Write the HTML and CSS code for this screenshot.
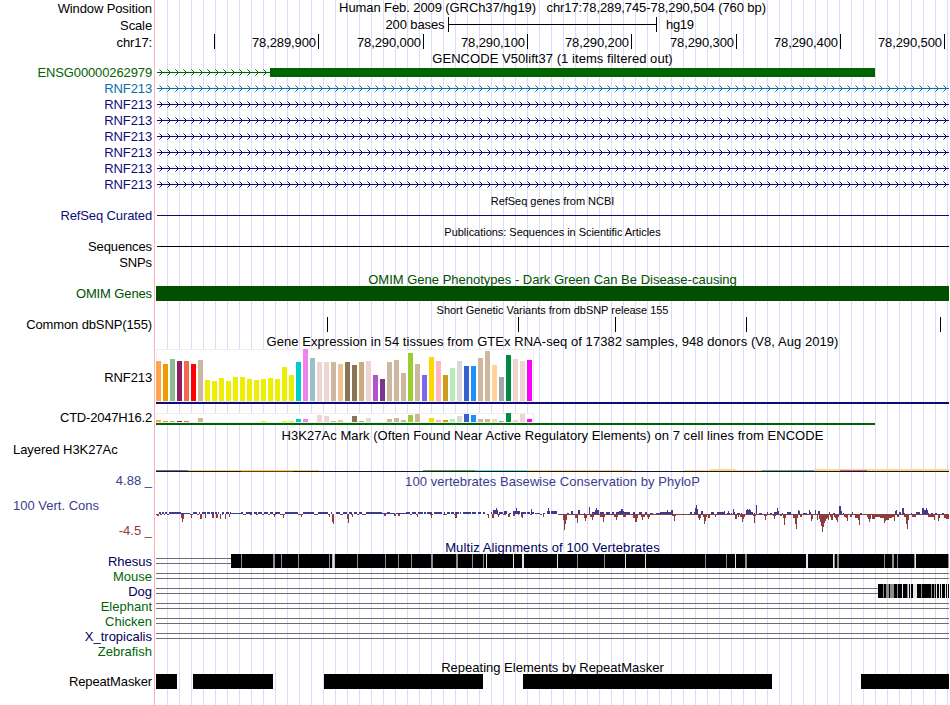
FILE: index.html
```html
<!DOCTYPE html>
<html lang="en">

<head>
    <meta charset="UTF-8">
    <title>Genome Browser - chr17:78,289,745-78,290,504</title>
    <link rel="stylesheet" href="styles.css">
</head>

<body>
    <main class="browser">
        <div class="track ruler">
            <div class="label">Window Position</div>
            <div class="title position">Human Feb. 2009 (GRCh37/hg19) &nbsp; chr17:78,289,745-78,290,504 (760 bp)</div>
        </div>
        <div class="track ruler">
            <div class="label">Scale</div>
            <svg class="plot" width="793" height="17">
                <text x="288.5" y="12" text-anchor="end" textLength="59">200 bases</text>
                <path d="M292 0h1v15h-1zM293 7h207v1h-207zM500 0h1v15h-1z" />
                <text x="510" y="12" textLength="28">hg19</text>
            </svg>
        </div>
        <div class="track coords">
            <div class="label">chr17:</div>
            <svg class="plot" id="coords" width="793" height="15"></svg>
        </div>

        <div class="heading">GENCODE V50lift37 (1 items filtered out)</div>
        <div class="track gene green">
            <div class="label">ENSG00000262979</div>
            <svg class="plot transcript" data-end="114" width="793" height="16">
                <rect x="114" y="4" width="605" height="9" />
            </svg>
        </div>
        <div class="track gene lightblue">
            <div class="label">RNF213</div>
            <svg class="plot transcript" width="793" height="16"></svg>
        </div>
        <div class="track gene navy">
            <div class="label">RNF213</div>
            <svg class="plot transcript" width="793" height="16"></svg>
        </div>
        <div class="track gene navy">
            <div class="label">RNF213</div>
            <svg class="plot transcript" width="793" height="16"></svg>
        </div>
        <div class="track gene navy">
            <div class="label">RNF213</div>
            <svg class="plot transcript" width="793" height="16"></svg>
        </div>
        <div class="track gene navy">
            <div class="label">RNF213</div>
            <svg class="plot transcript" width="793" height="16"></svg>
        </div>
        <div class="track gene navy">
            <div class="label">RNF213</div>
            <svg class="plot transcript" width="793" height="16"></svg>
        </div>
        <div class="track gene navy">
            <div class="label">RNF213</div>
            <svg class="plot transcript" width="793" height="16"></svg>
        </div>

        <div class="heading small">RefSeq genes from NCBI</div>
        <div class="track navy">
            <div class="label">RefSeq Curated</div>
            <svg class="plot" width="793" height="15">
                <rect x="1" y="7" width="792" height="1" />
            </svg>
        </div>

        <div class="heading small">Publications: Sequences in Scientific Articles</div>
        <div class="track">
            <div class="label">Sequences</div>
            <svg class="plot" width="793" height="15">
                <rect x="1" y="7" width="792" height="1" />
            </svg>
        </div>
        <div class="track gene">
            <div class="label">SNPs</div>
        </div>

        <div class="heading omim">OMIM Gene Phenotypes - Dark Green Can Be Disease-causing</div>
        <div class="track omim">
            <div class="label">OMIM Genes</div>
            <svg class="plot" width="793" height="15">
                <rect width="793" height="15" />
            </svg>
        </div>

        <div class="heading small">Short Genetic Variants from dbSNP release 155</div>
        <div class="track">
            <div class="label">Common dbSNP(155)</div>
            <svg class="plot" width="793" height="15">
                <path d="M171 0h1v15h-1zM362 0h1v15h-1zM459 0h1v15h-1zM590 0h1v15h-1zM784 0h1v15h-1z" />
            </svg>
        </div>

        <div class="heading gtex-heading">Gene Expression in 54 tissues from GTEx RNA-seq of 17382 samples, 948 donors (V8, Aug 2019)</div>
        <div class="track gtex">
            <div class="label">RNF213</div>
            <svg class="plot" width="793" height="55">
                <rect class="box" x="0.5" y="0.5" width="377" height="52" />
                <g id="gtexRnf"></g>
                <rect class="navy" x="0" y="53" width="793" height="2" />
            </svg>
        </div>
        <div class="track gtex-low">
            <div class="label">CTD-2047H16.2</div>
            <svg class="plot" width="793" height="12">
                <rect class="box" x="0.5" y="0.5" width="377" height="9" />
                <g id="gtexCtd"></g>
                <rect class="green" x="0" y="10" width="719" height="2" />
            </svg>
        </div>

        <div class="heading h3k-heading">H3K27Ac Mark (Often Found Near Active Regulatory Elements) on 7 cell lines from ENCODE</div>
        <div class="track h3k">
            <div class="label left">Layered H3K27Ac</div>
            <svg class="plot" width="793" height="29">
                <rect x="0" y="27" width="32" height="1" fill="#7d6985" />
                <rect x="32" y="27" width="131" height="1" fill="#ffc966" />
                <rect x="267" y="27" width="52" height="1" fill="#5bb04c" />
                <rect x="319" y="27" width="52" height="1" fill="#66e6cc" />
                <rect x="371" y="27" width="105" height="1" fill="#ffd070" />
                <rect x="528" y="27" width="78" height="1" fill="#ffd680" />
                <rect x="554" y="26" width="26" height="1" fill="#ffd680" />
                <rect x="606" y="27" width="52" height="1" fill="#6cab7c" />
                <rect x="658" y="26" width="26" height="2" fill="#ffd680" />
                <rect x="684" y="26" width="27" height="1" fill="#ffd0a0" />
                <rect x="684" y="27" width="27" height="1" fill="#e0607c" />
                <rect x="711" y="26" width="82" height="2" fill="#ffd680" />
                <rect x="0" y="28" width="793" height="1" fill="#15152e" />
                <rect x="85" y="28" width="52" height="1" fill="#5a4020" />
            </svg>
        </div>

        <div class="track cons">
            <div class="label cons-label">
                <span>4.88 _</span>
                <span class="cons-name">100 Vert. Cons</span>
                <span class="red">-4.5 _</span>
            </div>
            <div class="cons-plot">
                <div class="title">100 vertebrates Basewise Conservation by PhyloP</div>
                <svg class="plot" width="793" height="50">
                    <path id="consUp" />
                    <path id="consDown" class="red" />
                </svg>
            </div>
        </div>

        <div class="heading multiz-heading">Multiz Alignments of 100 Vertebrates</div>
        <div class="track species odd">
            <div class="label">Rhesus</div>
            <svg class="plot" id="rhesus" width="793" height="15">
                <path class="gap" d="M0 4h75v1h-75zM0 9h75v1h-75z" />
                <rect class="block" x="75" width="718" height="14" />
            </svg>
        </div>
        <div class="track species">
            <div class="label">Mouse</div>
            <svg class="plot" width="793" height="15">
                <path class="gap" d="M0 4h793v1h-793zM0 9h793v1h-793z" />
            </svg>
        </div>
        <div class="track species odd">
            <div class="label">Dog</div>
            <svg class="plot" id="dog" width="793" height="15">
                <path class="gap" d="M0 4h722v1h-722zM0 9h722v1h-722z" />
                <rect class="block" x="722" width="71" height="14" />
            </svg>
        </div>
        <div class="track species">
            <div class="label">Elephant</div>
            <svg class="plot" width="793" height="15">
                <path class="gap" d="M0 4h793v1h-793zM0 9h793v1h-793z" />
            </svg>
        </div>
        <div class="track species">
            <div class="label">Chicken</div>
            <svg class="plot" width="793" height="15">
                <path class="gap" d="M0 4h793v1h-793zM0 9h793v1h-793z" />
            </svg>
        </div>
        <div class="track species odd">
            <div class="label">X_tropicalis</div>
            <svg class="plot" width="793" height="15">
                <path class="gap" d="M0 4h793v1h-793zM0 9h793v1h-793z" />
            </svg>
        </div>
        <div class="track species">
            <div class="label">Zebrafish</div>
        </div>

        <div class="heading repeat-heading">Repeating Elements by RepeatMasker</div>
        <div class="track">
            <div class="label">RepeatMasker</div>
            <svg class="plot" width="793" height="15">
                <path d="M0 0h21v15h-21zM37 0h80v15h-80zM168 0h159v15h-159zM367 0h249v15h-249zM705 0h88v15h-88z" />
            </svg>
        </div>
    </main>
    <script src="script.js"></script>
</body>

</html>
```
FILE: styles.css
```css
* {
    box-sizing: border-box;
    margin: 0;
    padding: 0;
}

body {
    background: #fff;
    color: #000;
    font-family: "Liberation Sans", Arial, Helvetica, sans-serif;
    font-size: 13px;
}

.browser {
    width: 949px;
    height: 705px;
    overflow: hidden;
    background:
        linear-gradient(#ffb4b4, #ffb4b4) 154px 0 / 1px 100% no-repeat,
        repeating-linear-gradient(to right, transparent 0 11px, #dcdcfa 11px 12px) 156px 0 / 793px 100% no-repeat;
}

.track {
    display: flex;
    height: 15px;
}

.label {
    width: 152px;
    margin-right: 4px;
    line-height: 15px;
    letter-spacing: -0.12px;
    text-align: right;
    white-space: nowrap;
}

.title {
    width: 793px;
    line-height: 15px;
    text-align: center;
    white-space: pre;
}

.position {
    letter-spacing: -0.09px;
}

.heading {
    height: 16px;
    padding-left: 156px;
    line-height: 19px;
    letter-spacing: 0.05px;
    text-align: center;
    white-space: nowrap;
}

.heading.small {
    font-size: 11px;
    line-height: 18px;
    letter-spacing: -0.03px;
}

.plot {
    display: block;
    flex: none;
    fill: currentColor;
    overflow: hidden;
    shape-rendering: crispEdges;
}

.ruler {
    height: 17px;
}

.ruler .label {
    line-height: 17px;
}

.coords .label {
    line-height: 17px;
}

.coords + .heading {
    height: 15px;
}

.gene {
    height: 16px;
}

.gene .label {
    line-height: 18px;
}

.chevrons {
    fill: none;
    stroke: currentColor;
    shape-rendering: auto;
}

.green {
    color: #006400;
    fill: #006400;
}

.lightblue {
    color: #0c6cac;
}

.navy {
    color: #0c0c78;
    fill: #0c0c78;
}

.omim {
    color: #005000;
    letter-spacing: 0;
}

.heading.gtex-heading {
    height: 17px;
}

.box {
    fill: #fff;
    stroke: #eee;
}

.gtex {
    height: 64px;
}

.gtex .label {
    line-height: 57px;
}

.gtex-low {
    height: 14px;
}

.gtex-low .label {
    line-height: 10px;
    letter-spacing: -0.2px;
}

.heading.h3k-heading {
    line-height: 18px;
}

.h3k {
    height: 30px;
}

.left {
    padding-left: 13px;
    line-height: 13px;
    letter-spacing: -0.06px;
    text-align: left;
}

.cons {
    height: 67px;
    color: #3c3c8c;
}

.cons-label {
    display: flex;
    flex-direction: column;
    gap: 10px;
    letter-spacing: 0;
}

.cons-name {
    padding-left: 13px;
    text-align: left;
}

.red {
    color: #8c3c3c;
    fill: #8c3c3c;
}

.cons .title {
    height: 16px;
    line-height: 17px;
    letter-spacing: 0.06px;
}

.heading.multiz-heading {
    height: 14px;
    line-height: 16px;
    letter-spacing: 0.1px;
    color: #00005a;
}

.species {
    color: #00640a;
}

.species .label {
    letter-spacing: 0;
}

.odd {
    color: #00005a;
}

.gap {
    fill: #6e6e6e;
}

.block {
    fill: #000;
}

.heading.repeat-heading {
    height: 15px;
    line-height: 18px;
    letter-spacing: 0;
}
```
FILE: script.js
```js
const SVG_NS = 'http://www.w3.org/2000/svg';

function addShape(parent, name, attrs) {
    const el = document.createElementNS(SVG_NS, name);
    for (const key in attrs) {
        el.setAttribute(key, attrs[key]);
    }
    parent.appendChild(el);
    return el;
}

// Coordinate ruler
const coords = document.getElementById('coords');
const ticks = [
    [58, ''], [162, '78,289,900'], [267, '78,290,000'], [371, '78,290,100'],
    [475, '78,290,200'], [580, '78,290,300'], [684, '78,290,400'], [788, '78,290,500']
];
ticks.forEach(([x, name]) => {
    addShape(coords, 'rect', { x: x, y: 0, width: 1, height: 15 });
    if (name) {
        const text = addShape(coords, 'text', { x: x - 2, y: 13, 'text-anchor': 'end', textLength: 64 });
        text.textContent = name;
    }
});

// Intron lines with strand chevrons
document.querySelectorAll('.transcript').forEach(svg => {
    const end = Number(svg.dataset.end || 793);
    let d = '';
    for (let x = 3; x < end - 2; x += 8) {
        d += `M${x + 0.5} 5.5l3 3l-3 3`;
    }
    addShape(svg, 'rect', { x: 1, y: 8, width: end - 1, height: 1 });
    addShape(svg, 'path', { class: 'chevrons', d: d });
});

// GTEx expression bars
const yellow = Array(13).fill('#eeee00');
const tissueColors = [
    '#ffa54f', '#ee9a00', '#8fbc8f', '#8b1c62', '#ee6a50', '#ff0000', '#cdb79e', ...yellow,
    '#00cdcd', '#ee82ee', '#9ac0cd', '#eed5d2', '#eed5d2', '#cdb79e', '#eec591', '#8b7355',
    '#8b7355', '#cdaa7d', '#eed5d2', '#b452cd', '#7a378b', '#cdb79e', '#cdb79e', '#cdb79e',
    '#9acd32', '#cdb79e', '#7a67ee', '#ffd700', '#ffb6c1', '#cd9b1d', '#b4eeb4', '#d9d9d9',
    '#3a5fcd', '#1e90ff', '#cdb79e', '#cdb79e', '#ffd39b', '#a6a6a6', '#008b45', '#eed5d2',
    '#eed5d2', '#ff00ff'
];
const rnf213 = [
    40, 37, 42, 40, 40, 37, 41, 21, 20, 23, 20, 24, 24, 22, 21, 22, 23, 22, 34, 26, 39, 52, 43, 39, 39, 39, 37, 39,
    36, 39, 40, 26, 22, 39, 41, 28, 48, 37, 26, 44, 40, 26, 33, 40, 35, 35, 43, 50, 36, 24, 46, 42, 40, 41
];
const ctd = [
    2, 1, 1, 1, 1, 0, 4, 0, 0, 0, 0, 0, 0, 0, 0, 1, 0, 0, 1, 1, 3, 3, 0, 7, 6, 1, 2, 0,
    6, 1, 4, 0, 0, 3, 4, 2, 7, 8, 0, 4, 2, 2, 3, 6, 8, 7, 3, 3, 3, 1, 9, 2, 8, 3
];

function drawBars(id, values, base) {
    const group = document.getElementById(id);
    values.forEach((value, i) => {
        addShape(group, 'rect', { x: i * 7, y: base - value, width: 5, height: value, fill: tissueColors[i] });
    });
}
drawBars('gtexRnf', rnf213, 52);
drawBars('gtexCtd', ctd, 9);

// PhyloP scores as "x,width,height", height defaults to 2 above the axis and 1 below
const up = `3,2 6,2 9,2 13,12 25,9,1 37,4 43,1 46,4 51,3 55,3 59,2 62,1 66,2 70,3 74,1 75,10,1 85,2 90,6 98,3
102,4 108,4 114,3 119,5 129,13 147,11 162,10 175,1 180,4 187,4 193,3 198,3 203,3 210,16 226,13,1 231,3 240,10,1
250,4 256,4 262,2 264,3 268,2 271,5 278,8 288,1 291,3 295,3 299,4 304,1 307,8 316,4 322,3 327,2 335,1 337,5,4
340,1,6 343,4 348,3,3 353,2,1 357,4,3 360,1,6 361,3,3 365,5 371,3 375,1,5 376,2 379,5,1 387,2,1 391,3,3 392,1,6
395,6,3 411,2,1 415,2,3 422,2,4 428,1,1 433,1,7 436,3 439,4,4 440,1,6 444,4 450,4 456,2 460,3 463,5,3 465,2,5
468,6 477,2 483,3 489,2 494,3,1 500,4,1 504,13 511,1,4 515,2,4 534,2 538,1 539,1,6 540,1,9 541,1,5 545,2,3 555,3
561,8 568,1,3 571,3,1 572,1,3 575,1,1 577,1,5 578,1 581,3,1 585,1,1 590,5,4 591,1,5 593,1,5 595,2 598,1,1
600,1,9 603,3,1 611,1 614,2,1 618,3 621,1,6 622,1,3 626,1,1 631,4 642,1,4 643,1,3 647,4,1 653,1,4 654,1 659,1,4
662,2,3 673,1 677,2,1 683,2,8 685,1,3 687,1,1 696,1 704,2,1 739,2,3 740,1,4 743,2 746,2,6 748,1,1 755,1,1 760,4
766,2,6 768,1,4 769,3,4 770,1,6 772,1,1 775,2,1 779,2,1 786,2,1`;
const down = `0,3 1,2,2 4,2 8,1 11,2 25,3,4 26,1,8 27,1,5 34,3 35,1,4 41,2 44,2,5 49,1,4 56,2,4 60,2,4 64,1,5 66,1
69,1,5 73,1,3 87,3 94,2 100,2 106,2 112,2 117,3 118,1,3 124,5 127,1,4 142,5 145,1,3 158,4 172,2 173,1,3 176,2,8
177,1,10 184,3 191,2,5 192,1,9 195,2 196,1,3 201,2 206,4 228,2,2 238,2,2 242,2,2 254,2 260,2 261,1,3 274,3
275,1,4 287,4 298,3 299,2,4 331,2 332,1,4 336,2,4 341,3 342,1,3 347,3 352,2,3 357,2,2 362,1 365,2,3 366,1,4
374,2 384,2 387,1,3 402,391 407,4,6 408,2,10 408,1,16 419,3,4 421,1,9 428,3,4 429,1,7 434,4,3 436,1,6 444,5,3
447,1,8 458,4,3 460,1,6 467,3,3 477,5,4 479,2,8 485,4,3 486,1,6 491,3,3 492,1,5 516,4,2 518,1,7 542,3,4 543,1,6
547,4,3 548,1,10 549,1,7 552,2,4 559,1,3 579,2,5 582,1,3 584,5,3 586,1,8 587,1,5 597,3,2 598,1,9 608,3,2
609,1,6 617,3,2 618,1,5 624,2,2 627,3,4 628,1,11 637,5,4 639,2,10 640,1,15 644,2,3 655,1,7 656,1,5 661,1,6
663,1,5 664,1,8 665,1,12 666,1,18 667,1,13 668,1,9 669,1,7 670,1,5 671,1,4 672,1,6 674,1,3 675,2,6 678,1,3
679,1,4 680,1,6 681,1,8 682,1,3 688,3,3 690,1,4 691,1,7 694,2,3 699,3,4 702,1,6 703,1,11 711,4,3 712,1,5
713,1,8 714,1,5 716,3,5 719,5,3 724,4,4 728,1,9 729,1,7 730,3,6 733,3,4 736,3,3 738,1,7 741,2,3 748,5,3
750,1,10 751,1,15 752,1,6 756,4,3 772,4,3 776,3,3 778,1,6 782,1,7 783,1,4 788,3,4 790,3,5`;

function scorePath(data, sign, fallback) {
    return data.split(/\s+/).map(item => {
        const [x, w, h = fallback] = item.split(',').map(Number);
        return `M${x} 25h${w}v${sign * h}h${-w}z`;
    }).join('');
}
document.getElementById('consUp').setAttribute('d', scorePath(up, -1, 2));
document.getElementById('consDown').setAttribute('d', scorePath(down, 1, 1));

// Alignment mismatches: [x, width, color]
const g = '#8c8c8c';
const l = '#e4e4e4';
const rhesus = [
    [85, 1, g], [117, 2, g], [125, 1, g], [142, 1, g], [173, 1, g], [176, 3, '#bbb'], [177, 1, l], [201, 1, g],
    [229, 1, g], [242, 1, g], [255, 1, g], [275, 2, g], [300, 2, g], [316, 1, g], [327, 1, g], [330, 1, l],
    [357, 1, l], [366, 2, l], [401, 1, l], [421, 1, g], [448, 1, g], [469, 1, l], [489, 1, l], [549, 1, g],
    [570, 1, g], [579, 1, l], [589, 2, g], [650, 2, l], [677, 1, l], [678, 1, g], [681, 2, g], [728, 1, g],
    [736, 2, g], [741, 1, g], [758, 1, g], [759, 1, l], [792, 1, g]
];
const dog = [
    [727, 1, g], [730, 3, g], [734, 4, g], [741, 1, g], [746, 1, l], [751, 1, g], [752, 1, l], [754, 1, l],
    [757, 1, l], [758, 3, l], [765, 1, g], [775, 1, g], [778, 1, g], [780, 1, l], [783, 1, l], [785, 1, l],
    [789, 1, l], [791, 1, l]
];

function drawStripes(id, stripes) {
    const svg = document.getElementById(id);
    stripes.forEach(([x, width, fill]) => addShape(svg, 'rect', { x: x, y: 0, width: width, height: 14, fill: fill }));
}
drawStripes('rhesus', rhesus);
drawStripes('dog', dog);
```
